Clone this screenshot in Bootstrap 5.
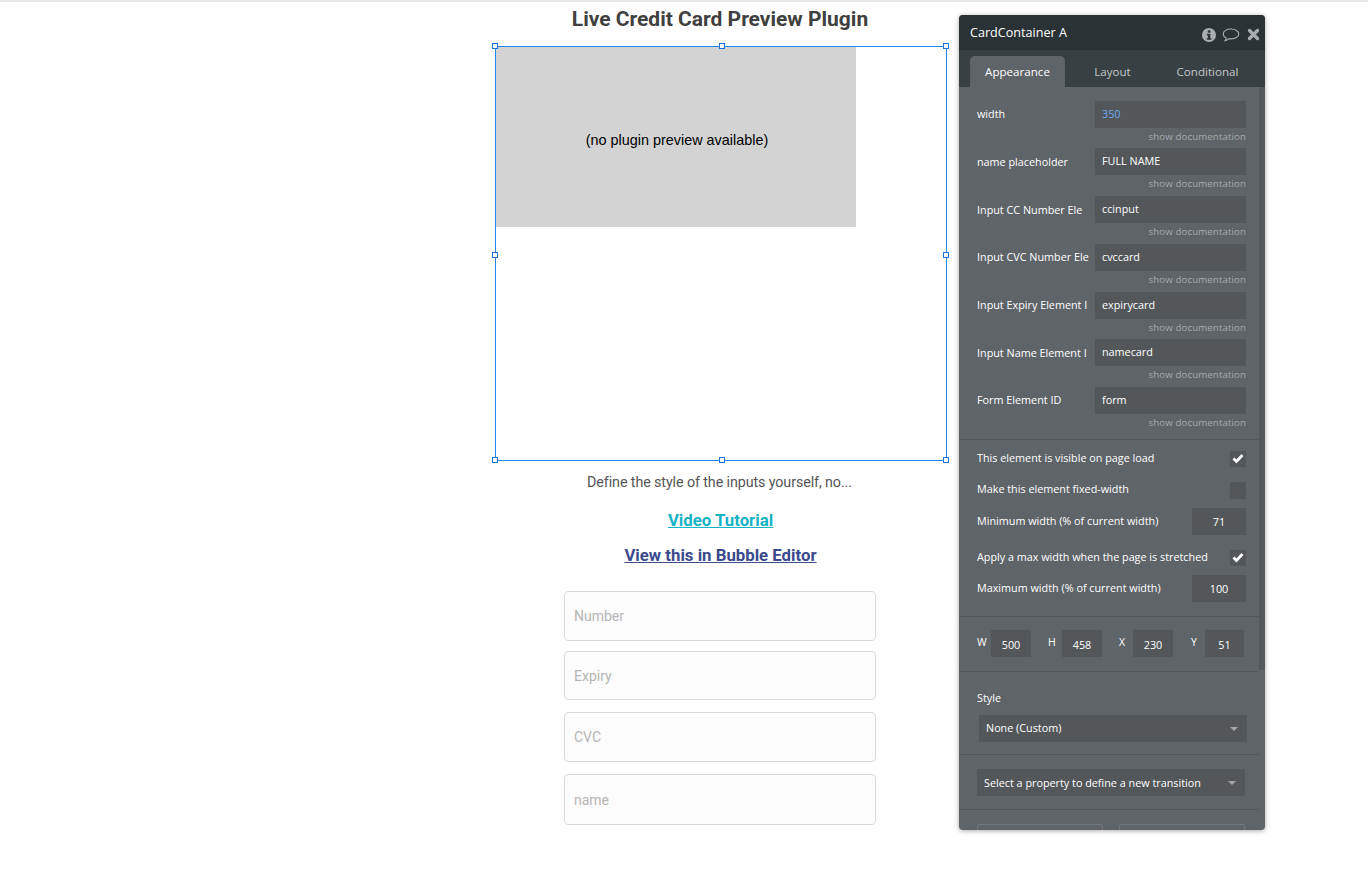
<!DOCTYPE html>
<html lang="en">
<head>
  <meta charset="UTF-8" />
  <meta name="viewport" content="width=device-width, initial-scale=1" />
  <title>Live Credit Card Preview Plugin</title>
  <link href="https://cdn.jsdelivr.net/npm/bootstrap@5.3.2/dist/css/bootstrap.min.css" rel="stylesheet" />
  <style>
    html, body { height: 869px; overflow: hidden; background: #fff; }
    .editor-page { position: relative; height: 869px; border-top: 2px solid #e8e8e8; }

    /* canvas column */
    .canvas-col { width: 452px; margin-left: 495px; font-family: Roboto, "Liberation Sans", sans-serif; color: #444; }
    .page-title { font-size: 21px; font-weight: 700; line-height: 24px; height: 44px; padding-top: 5px; padding-right: 2px; text-align: center; margin: 0; color: #404040; }
    .select-box { position: relative; height: 415px; border: 1px solid #1e88f0; }
    .handle { position: absolute; width: 6px; height: 6px; background: #fff; border: 1px solid #1673d8; }
    .preview-grey { width: 360px; height: 180px; background: #d3d3d3; display: flex; align-items: center; justify-content: center; font-family: "Liberation Sans", sans-serif; font-size: 14.4px; color: #000; padding-top: 8px; padding-left: 2px; }
    .tagline { font-size: 14.3px; line-height: 20px; text-align: center; margin-top: 11px; padding-right: 3px; color: #555; letter-spacing: -.1px; }
    .big-link { display: block; font-size: 16.8px; font-weight: 700; line-height: 20px; text-align: center; text-decoration: underline; padding-right: 1px; }
    .link-teal { margin-top: 18px; color: #13b2c6; }
    .link-navy { margin-top: 15px; color: #3a4a8c; }
    .demo-input { display: block; width: 312px; height: 50px; margin-left: 69px; padding: 0 9px; background: #fcfcfc; border: 1px solid #d9d9d9; border-radius: 4px; font-size: 14px; color: #333; }
    .demo-input::placeholder { color: #b5b5b5; opacity: 1; }

    /* property editor */
    .prop-panel { position: absolute; left: 959px; top: 13px; width: 306px; height: 815px; overflow: hidden; background: #5f6468; border-radius: 4px; box-shadow: 0 1px 5px rgba(0,0,0,.35); font-family: "Open Sans", sans-serif; font-size: 10.8px; color: #fff; }
    .prop-head { height: 35px; background: #2b3236; padding: 1px 11px 0; font-size: 12.6px; }
    .prop-tabs { height: 37px; background: #394043; padding: 6px 0 0 11px; font-size: 11.6px; }
    .prop-tab { width: 95px; height: 31px; line-height: 31px; text-align: center; color: #c4c7c8; border-radius: 5px 5px 0 0; }
    .prop-tab.on { background: #5f6468; color: #fff; }
    .prop-scroll { position: absolute; right: 0; top: 72px; width: 6px; height: 583px; background: #54585c; }
    .prop-body { width: 300px; }
    .prop-sec { border-bottom: 1px solid #54585b; }
    .field-row { height: 27px; padding: 0 13px 0 18px; }
    .field-row label { width: 118px; white-space: nowrap; }
    .dark-input { background: #53575a; height: 27px; line-height: 26.5px; color: #fff; padding: 0 7px; }
    .wide-input { width: 151px; }
    .doc-link { height: 20.7px; padding-right: 13px; text-align: right; color: #a6aaad; font-size: 9.7px; line-height: 17px; letter-spacing: .1px; }
    .check-box { width: 16px; height: 16px; background: #53575a; display: flex; align-items: center; justify-content: center; }
    .num-input { width: 54px; text-align: center; line-height: 28px; }
    .opt-row { padding: 0 13px 0 18px; }
    .opt-label { line-height: 12px; padding-bottom: 2px; }
    .opt-label-up { line-height: 12px; padding-bottom: 4px; }
    .dim-input { width: 40px; text-align: center; padding: 0; line-height: 30px; }
    .dim-label { width: 14px; font-size: 10.5px; line-height: 25px; }
    .select-text { line-height: 12px; padding-bottom: 2px; }
    .drop-arrow { width: 0; height: 0; border-left: 4.5px solid transparent; border-right: 4.5px solid transparent; border-top: 4.5px solid #a3a6a8; margin-right: 2px; }
    .stub-btn { width: 126px; height: 20px; background: #5f6468; border: 1px solid #73777a; border-radius: 2px; }
  </style>
</head>
<body>
  <div class="editor-page">
    <div class="canvas-col">
      <h1 class="page-title">Live Credit Card Preview Plugin</h1>
      <div class="select-box">
        <div class="preview-grey">(no plugin preview available)</div>
        <span class="handle" style="left:-4px;top:-4px"></span>
        <span class="handle" style="left:223px;top:-4px"></span>
        <span class="handle" style="left:447px;top:-4px"></span>
        <span class="handle" style="left:-4px;top:205px"></span>
        <span class="handle" style="left:447px;top:205px"></span>
        <span class="handle" style="left:-4px;top:410px"></span>
        <span class="handle" style="left:223px;top:410px"></span>
        <span class="handle" style="left:447px;top:410px"></span>
      </div>
      <div class="tagline">Define the style of the inputs yourself, no...</div>
      <a class="big-link link-teal" href="#">Video Tutorial</a>
      <a class="big-link link-navy" href="#">View this in Bubble Editor</a>
      <input class="demo-input" style="margin-top:26px" placeholder="Number">
      <input class="demo-input" style="margin-top:10px;height:49px" placeholder="Expiry">
      <input class="demo-input" style="margin-top:12px" placeholder="CVC">
      <input class="demo-input" style="margin-top:12px;height:51px" placeholder="name">
    </div>

    <div class="prop-panel">
      <div class="prop-head d-flex align-items-center justify-content-between">
        <span>CardContainer A</span>
        <span class="d-flex align-items-center gap-1" style="margin-right:-6px;padding-top:3px">
          <svg width="14" height="14" viewBox="0 0 14 14"><circle cx="7" cy="7" r="7" fill="#a9adaf"/><rect x="5.8" y="2.4" width="2.6" height="2.3" fill="#2b3236"/><path d="M4.8 5.8h3.5v4.4h1.1v1.5H4.8v-1.500h1v-2.900h-1z" fill="#2b3236"/></svg>
          <svg width="18" height="14" viewBox="0 0 18 14" style="margin-left:2px"><path d="M9 1C4.8 1 1.2 3 1.2 6c0 1.7 1.2 3.100 3 4-.1 1-.6 2-1.200 2.800 1.600-.3 3-1.100 3.900-2.100.7.1 1.400.2 2.100.2 4.200 0 7.800-2.100 7.800-4.900S13.200 1 9 1z" fill="none" stroke="#a9adaf" stroke-width="1.100"/></svg>
          <svg width="13" height="13" viewBox="0 0 13 13" style="margin-left:3px"><path d="M2.500 2.500l8 8M10.500 2.500l-8 8" stroke="#a9adaf" stroke-width="3.300" stroke-linecap="round"/></svg>
        </span>
      </div>
      <div class="prop-tabs d-flex">
        <div class="prop-tab on">Appearance</div>
        <div class="prop-tab">Layout</div>
        <div class="prop-tab">Conditional</div>
      </div>
      <div class="prop-scroll"></div>
      <div class="prop-body">
        <div class="prop-sec" style="padding-top:13.8px;height:353px" id="fields"></div>
        <div class="prop-sec" style="height:177px">
          <div class="opt-row d-flex align-items-center justify-content-between" style="padding-top:11px"><span class="opt-label">This element is visible on page load</span><span class="check-box"><svg width="12" height="10" viewBox="0 0 12 10"><path d="M1.500 4.500l3 3 6-6.500" fill="none" stroke="#fff" stroke-width="2.800"/></svg></span></div>
          <div class="opt-row d-flex align-items-center justify-content-between" style="padding-top:15px"><span class="opt-label-up">Make this element fixed-width</span><span class="check-box" style="height:17px"></span></div>
          <div class="opt-row d-flex align-items-center justify-content-between" style="padding-top:9px"><span class="opt-label">Minimum width (% of current width)</span><span class="dark-input num-input">71</span></div>
          <div class="opt-row d-flex align-items-center justify-content-between" style="padding-top:15px"><span class="opt-label">Apply a max width when the page is stretched</span><span class="check-box"><svg width="12" height="10" viewBox="0 0 12 10"><path d="M1.500 4.500l3 3 6-6.500" fill="none" stroke="#fff" stroke-width="2.800"/></svg></span></div>
          <div class="opt-row d-flex align-items-center justify-content-between" style="padding-top:9px"><span class="opt-label">Maximum width (% of current width)</span><span class="dark-input num-input">100</span></div>
        </div>
        <div class="prop-sec d-flex align-items-start" style="height:55px;padding:13px 0 0 18px">
          <span class="dim-label">W</span><span class="dark-input dim-input">500</span>
          <span class="dim-label" style="margin-left:17px">H</span><span class="dark-input dim-input">458</span>
          <span class="dim-label" style="margin-left:17px">X</span><span class="dark-input dim-input">230</span>
          <span class="dim-label" style="margin-left:18px">Y</span><span class="dark-input dim-input" style="width:39px">51</span>
        </div>
        <div class="prop-sec" style="height:83px;padding:18px 0 0 18px">
          <div style="line-height:16px">Style</div>
          <div class="dark-input d-flex align-items-center justify-content-between" style="width:268px;margin:9px 0 0 2px"><span class="select-text">None (Custom)</span><span class="drop-arrow"></span></div>
        </div>
        <div class="prop-sec" style="height:55px;padding:14px 0 0 18px">
          <div class="dark-input d-flex align-items-center justify-content-between" style="width:268px"><span class="select-text" style="padding-bottom:0">Select a property to define a new transition</span><span class="drop-arrow"></span></div>
        </div>
        <div class="d-flex gap-3" style="padding:14px 0 0 18px"><span class="stub-btn"></span><span class="stub-btn"></span></div>
      </div>
    </div>
  </div>

  <script>
    // champs du panneau : libellé, valeur
    const fields = [
      ['width', '350'],
      ['name placeholder', 'FULL NAME'],
      ['Input CC Number Ele', 'ccinput'],
      ['Input CVC Number Ele', 'cvccard'],
      ['Input Expiry Element I', 'expirycard'],
      ['Input Name Element I', 'namecard'],
      ['Form Element ID', 'form']
    ];
    document.getElementById('fields').innerHTML = fields.map((f, i) => `
      <div class="field-row d-flex align-items-center">
        <label>${f[0]}</label>
        <span class="dark-input wide-input"${i === 0 ? ' style="color:#6aa9f0"' : ''}>${f[1]}</span>
      </div>
      <div class="doc-link">show documentation</div>`).join('');
  </script>
</body>
</html>
